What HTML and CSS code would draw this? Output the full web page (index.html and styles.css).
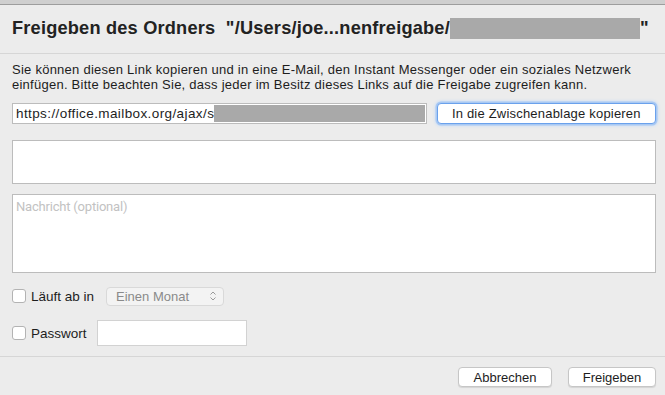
FILE: index.html
```html
<!DOCTYPE html>
<html lang="de">
<head>
  <meta charset="UTF-8" />
  <title>Freigeben des Ordners</title>
  <meta name="viewport" content="width=device-width, initial-scale=1" />
  <link rel="stylesheet" href="styles.css">
</head>
<body>
  <!-- Fensterrand oben -->
  <div class="window-edge"></div>

  <header class="dialog-head">
    <h1>Freigeben des Ordners &nbsp;"/Users/joe...nenfreigabe/<span class="redacted title-redacted"></span>"</h1>
  </header>

  <main class="dialog-body">
    <p class="hint">Sie können diesen Link kopieren und in eine E-Mail, den Instant Messenger oder ein soziales Netzwerk einfügen. Bitte beachten Sie, dass jeder im Besitz dieses Links auf die Freigabe zugreifen kann.</p>

    <!-- Link + Kopieren -->
    <div class="link-row">
      <div class="link-field">
        <span class="link-text">https://office.mailbox.org/ajax/s</span><span class="redacted link-redacted"></span>
      </div>
      <button type="button" class="btn btn-focus">In die Zwischenablage kopieren</button>
    </div>

    <div class="box recipients"></div>
    <div class="box message"><span class="placeholder">Nachricht (optional)</span></div>

    <!-- Optionen -->
    <div class="option-row">
      <label class="check"><span class="checkbox"></span>Läuft ab in</label>
      <div class="select">
        <span>Einen Monat</span>
        <svg viewBox="0 0 8 12" class="chevrons">
          <path d="M1.5 4.5 L4 2 L6.5 4.5 M1.5 7.5 L4 10 L6.5 7.5" />
        </svg>
      </div>
    </div>
    <div class="option-row pw-row">
      <label class="check"><span class="checkbox"></span>Passwort</label>
      <div class="pw-field"></div>
    </div>
  </main>

  <footer class="dialog-foot">
    <button type="button" class="btn">Abbrechen</button>
    <button type="button" class="btn btn-share">Freigeben</button>
  </footer>
</body>
</html>
```

FILE: styles.css
```css
:root {
  --bg: #ececec;
  --line: #d6d6d6;
  --field-border: #bcbcbc;
  --text: #1d1d1d;
  --redact: #a9a9a9;
}

* { box-sizing: border-box; margin: 0; padding: 0; }

html, body {
  width: 100%; height: 100%;
  background: var(--bg);
  color: var(--text);
  font-family: "Liberation Sans", Arial, sans-serif;
  font-size: 13px;
  overflow: hidden;
}

.window-edge {
  height: 5px;
  background: #cfcfcf;
  border-bottom: 1px solid #9d9d9d;
}

.dialog-head {
  height: 49px;
  padding: 10px 12px 0 12px;
  border-bottom: 1px solid var(--line);
}
.dialog-head h1 {
  font-size: 18.2px;
  font-weight: 700;
  letter-spacing: 0.2px;
  line-height: 26px;
  white-space: nowrap;
  color: #222;
}
.redacted {
  display: inline-block;
  background: var(--redact);
}
.title-redacted {
  width: 190px;
  height: 21px;
  vertical-align: -5px;
}

.dialog-body {
  padding: 8px 9px 0 12px;
}

.hint {
  line-height: 15px;
  letter-spacing: 0.25px;
  margin-bottom: 11px;
  width: 645px;
}

.link-row {
  display: flex;
  align-items: center;
  gap: 10px;
  margin-bottom: 16px;
}
.link-field {
  width: 416px;
  height: 21px;
  background: #fff;
  border: 1px solid var(--field-border);
  padding: 1px 1px 1px 3px;
  display: flex;
  align-items: center;
  white-space: nowrap;
}
.link-text {
  font-size: 13.5px;
  letter-spacing: 0.4px;
}
.link-redacted {
  flex: 1;
  height: 17px;
}

.btn {
  font-family: inherit;
  font-size: 13px;
  color: var(--text);
  background: #fff;
  border: 1px solid #c6c6c6;
  border-radius: 4px;
  height: 20px;
  padding: 0 12px;
  box-shadow: 0 1px 1px #0000001a;
}
.btn-focus {
  width: 220px;
  height: 21px;
  letter-spacing: 0.2px;
  border-color: #6aa1ec;
  box-shadow: 0 0 0 1.5px #a9c9f3, 0 0 3px 2px #c5dbf7;
}

.box {
  width: 644px;
  background: #fff;
  border: 1px solid var(--field-border);
}
.recipients {
  height: 44px;
  margin-bottom: 10px;
}
.message {
  height: 79px;
  padding: 4px 3px;
  margin-bottom: 13px;
}
.placeholder {
  font-family: Roboto, "Liberation Sans", sans-serif;
  color: #c2c2c2;
  font-size: 13px;
  letter-spacing: -0.2px;
}

.option-row {
  display: flex;
  align-items: center;
  height: 20px;
  margin-bottom: 14px;
}
.pw-row {
  height: 26px;
  margin-bottom: 10px;
}
.check {
  display: flex;
  align-items: center;
  gap: 5px;
  font-size: 13.5px;
}
.checkbox {
  width: 14px;
  height: 14px;
  background: #fff;
  border: 1px solid #b3b3b3;
  border-radius: 3px;
}
.select {
  margin-left: 12px;
  width: 118px;
  height: 19px;
  background: #f3f3f3;
  border: 1px solid #d9d9d9;
  border-radius: 4px;
  display: flex;
  align-items: center;
  justify-content: space-between;
  padding: 0 6px 0 9px;
  color: #8a8a8a;
}
.chevrons {
  width: 8px;
  height: 12px;
  fill: none;
  stroke: #9a9a9a;
  stroke-width: 1;
}
.pw-field {
  margin-left: 10px;
  width: 150px;
  height: 26px;
  background: #fff;
  border: 1px solid #d2d2d2;
}

.dialog-foot {
  border-top: 1px solid var(--line);
  display: flex;
  justify-content: flex-end;
  gap: 16px;
  padding: 10px 9px 0 0;
}
.dialog-foot .btn { width: 94px; }
.dialog-foot .btn-share { width: 88px; }
```
